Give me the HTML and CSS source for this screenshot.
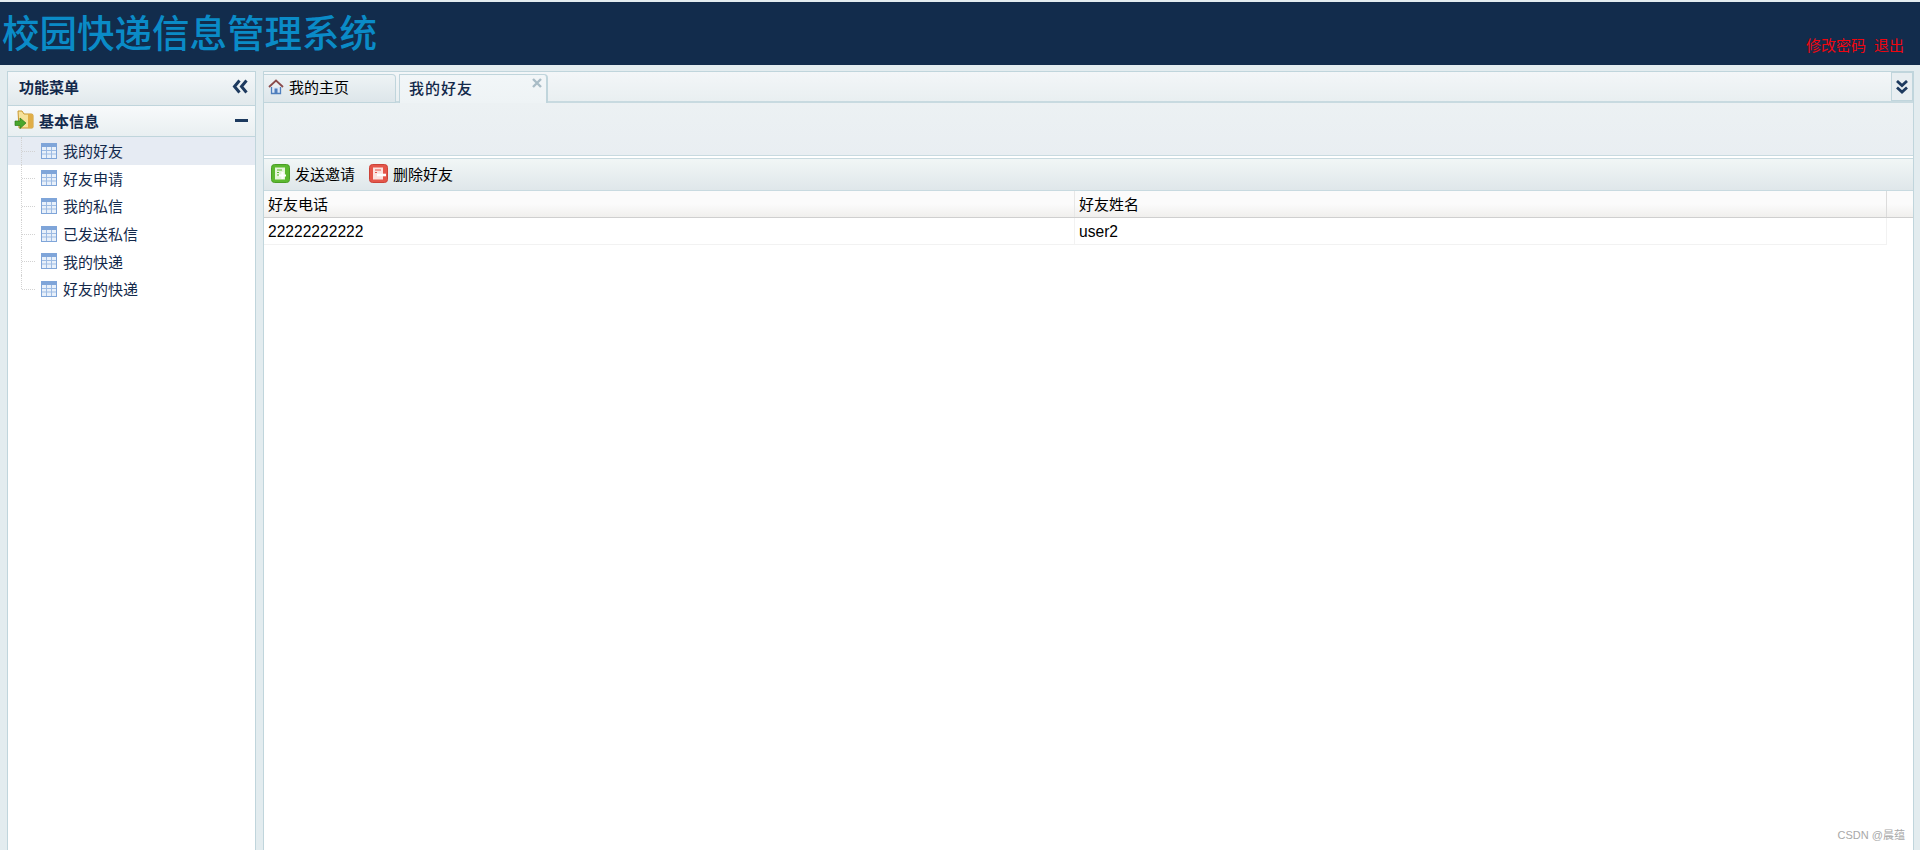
FILE: index.html
```html
<!DOCTYPE html>
<html lang="zh">
<head>
<meta charset="utf-8">
<title>校园快递信息管理系统</title>
<link rel="stylesheet" href="styles.css">
</head>
<body>
<header class="top">
  <h1 class="brand">校园快递信息管理系统</h1>
  <nav class="user-links"><a>修改密码</a><a>退出</a></nav>
</header>
<div class="main">
  <aside class="side">
    <div class="side-head">
      <span>功能菜单</span>
      <svg class="ico-collapse" viewBox="0 0 16 15" width="16" height="15"><path d="M7.500 1.500 2.500 7.500l5 6M14.500 1.500 9.500 7.500l5 6" fill="none" stroke="#1d3a5f" stroke-width="3"/></svg>
    </div>
    <div class="group-head">
      <svg class="ico-folder" viewBox="0 0 20 20" width="20" height="20">
        <path d="M4 1h4l2 3h7.500A1.500 1.500 0 0 1 19 5.500V17a1 1 0 0 1-1 1H5z" fill="#f6e29b" stroke="#c9982f"/>
        <path d="M14 4h3.500A1.500 1.500 0 0 1 19 5.500V17a1 1 0 0 1-1 1h-4z" fill="#e0ae47"/>
        <path d="M1 11h5V8l6 5-6 5.500V15.500H1z" fill="#4aa72c" stroke="#2f7d1c" stroke-width=".7"/>
      </svg>
      <span class="group-title">基本信息</span>
      <span class="minus"></span>
    </div>
    <ul class="tree">
      <li class="tree-item is-on"><i class="twig"></i><svg class="ico-grid" viewBox="0 0 16 16" width="16" height="16"><rect x=".5" y=".5" width="15" height="15" fill="#e8f0fa" stroke="#7fa5d9"/><rect x="1" y="1" width="14" height="3" fill="#7fa5d9"/><path d="M1 7.500h14M1 11h14M5.500 4v11M10.500 4v11" stroke="#9dbbe3"/></svg><span>我的好友</span></li>
      <li class="tree-item"><i class="twig"></i><svg class="ico-grid" viewBox="0 0 16 16" width="16" height="16"><rect x=".5" y=".5" width="15" height="15" fill="#e8f0fa" stroke="#7fa5d9"/><rect x="1" y="1" width="14" height="3" fill="#7fa5d9"/><path d="M1 7.500h14M1 11h14M5.500 4v11M10.500 4v11" stroke="#9dbbe3"/></svg><span>好友申请</span></li>
      <li class="tree-item"><i class="twig"></i><svg class="ico-grid" viewBox="0 0 16 16" width="16" height="16"><rect x=".5" y=".5" width="15" height="15" fill="#e8f0fa" stroke="#7fa5d9"/><rect x="1" y="1" width="14" height="3" fill="#7fa5d9"/><path d="M1 7.500h14M1 11h14M5.500 4v11M10.500 4v11" stroke="#9dbbe3"/></svg><span>我的私信</span></li>
      <li class="tree-item"><i class="twig"></i><svg class="ico-grid" viewBox="0 0 16 16" width="16" height="16"><rect x=".5" y=".5" width="15" height="15" fill="#e8f0fa" stroke="#7fa5d9"/><rect x="1" y="1" width="14" height="3" fill="#7fa5d9"/><path d="M1 7.500h14M1 11h14M5.500 4v11M10.500 4v11" stroke="#9dbbe3"/></svg><span>已发送私信</span></li>
      <li class="tree-item"><i class="twig"></i><svg class="ico-grid" viewBox="0 0 16 16" width="16" height="16"><rect x=".5" y=".5" width="15" height="15" fill="#e8f0fa" stroke="#7fa5d9"/><rect x="1" y="1" width="14" height="3" fill="#7fa5d9"/><path d="M1 7.500h14M1 11h14M5.500 4v11M10.500 4v11" stroke="#9dbbe3"/></svg><span>我的快递</span></li>
      <li class="tree-item is-last"><i class="twig"></i><svg class="ico-grid" viewBox="0 0 16 16" width="16" height="16"><rect x=".5" y=".5" width="15" height="15" fill="#e8f0fa" stroke="#7fa5d9"/><rect x="1" y="1" width="14" height="3" fill="#7fa5d9"/><path d="M1 7.500h14M1 11h14M5.500 4v11M10.500 4v11" stroke="#9dbbe3"/></svg><span>好友的快递</span></li>
    </ul>
  </aside>
  <section class="content">
    <div class="tabs">
      <div class="tab">
        <svg class="ico-home" viewBox="0 0 16 16" width="16" height="16"><path d="M1 8 8 1.500 15 8" fill="none" stroke="#8a4b4b" stroke-width="1.800"/><path d="M3.500 8v6.500h9V8" fill="#dbe7f6" stroke="#4f7fbd" stroke-width="1.300"/><rect x="6.500" y="9.500" width="3" height="5" fill="#4f7fbd"/></svg>
        <span>我的主页</span>
      </div>
      <div class="tab tab-active">
        <span>我的好友</span>
        <svg class="ico-close" viewBox="0 0 10 10" width="10" height="10"><path d="M1 1l8 8M9 1 1 9" stroke="#a9bcc6" stroke-width="2.400"/></svg>
      </div>
      <button class="tab-more" type="button" aria-label="more">
        <svg viewBox="0 0 14 14" width="14" height="14"><path d="M2 1 7 5.500 12 1M2 7.500 7 12l5-4.500" fill="none" stroke="#1d3a5f" stroke-width="2.800"/></svg>
      </button>
    </div>
    <div class="filter-bar"></div>
    <div class="toolbar">
      <a class="tool">
        <svg viewBox="0 0 19 19" width="19" height="19"><rect x=".5" y=".5" width="18" height="18" rx="3" fill="#5cb82f" stroke="#4a9e25"/><rect x="4" y="3.500" width="10" height="12" fill="#e6f5da"/><path d="M6 6h5M6 8.500h2M6 11h2" stroke="#5cb82f"/><path d="M11.500 8v7M8 11.500h7" stroke="#fff" stroke-width="2.200"/></svg>
        <span>发送邀请</span>
      </a>
      <a class="tool">
        <svg viewBox="0 0 19 19" width="19" height="19"><rect x=".5" y=".5" width="18" height="18" rx="3" fill="#e4564a" stroke="#cc4338"/><rect x="4" y="3.500" width="10" height="12" fill="#fbe3e0"/><path d="M6 6h6M6 8.500h2" stroke="#e4564a"/><path d="M8 11h9" stroke="#fff" stroke-width="2.600"/></svg>
        <span>删除好友</span>
      </a>
    </div>
    <div class="grid-head">
      <div class="cell cell-a">好友电话</div>
      <div class="cell cell-b">好友姓名</div>
    </div>
    <div class="grid-row">
      <div class="cell cell-a value">22222222222</div>
      <div class="cell cell-b value">user2</div>
    </div>
  </section>
</div>
<span class="watermark">CSDN @晨蕴</span>
</body>
</html>
```
FILE: styles.css
```css
* { box-sizing: border-box; }
html, body { height: 100%; }
body {
  margin: 0;
  height: 850px;
  overflow: hidden;
  position: relative;
  display: flex;
  flex-direction: column;
  background: #e3ecef;
  font-family: "Liberation Sans", "Noto Sans CJK SC", sans-serif;
  font-size: 15px;
  color: #000;
}
.top {
  margin-top: 2px;
  height: 63px;
  flex: none;
  display: flex;
  justify-content: space-between;
  background: #122c4c;
}
.brand {
  margin: 0 0 0 2px;
  padding-top: 10px;
  font-size: 37.500px;
  line-height: 45px;
  font-weight: 500;
  color: #0a8bc7;
}
.user-links {
  display: flex;
  gap: 8px;
  padding: 34px 16px 0 0;
  color: #f0060f;
  font-size: 15px;
  line-height: 20px;
}
.main {
  flex: 1;
  display: flex;
  gap: 7px;
  padding: 6px 6px 0 7px;
  min-height: 0;
}
.side {
  width: 249px;
  flex: none;
  background: #fff;
  border: 1px solid #c0d5dc;
  border-bottom: 0;
}
.side-head {
  height: 34px;
  padding: 0 7px 5px 11px;
  display: flex;
  align-items: center;
  justify-content: space-between;
  background: linear-gradient(#f4f7f9, #e1e9ec);
  border-bottom: 1px solid #c0d5dc;
  font-weight: 700;
  color: #13294b;
}
.group-head {
  height: 31px;
  padding: 0 7px 2px 6px;
  display: flex;
  align-items: center;
  background: linear-gradient(#f8fafb, #e9eff1);
  border-bottom: 1px solid #c0d5dc;
  font-weight: 700;
  color: #13294b;
}
.group-title { margin-left: 5px; flex: 1; }
.minus { width: 13px; height: 3px; background: #1d3a5f; }
.tree { list-style: none; margin: 0; padding: 0; }
.tree-item {
  position: relative;
  height: 27.600px;
  display: flex;
  align-items: center;
  padding-left: 33px;
  color: #13294b;
  gap: 6px;
}
.tree-item.is-on { background: #e6ebf3; }
.tree-item .ico-grid { flex: none; }
.twig {
  position: absolute;
  left: 13px;
  top: 0;
  bottom: 0;
  width: 14px;
  border-left: 1px dotted #d2d2d2;
}
.is-last .twig { bottom: 50%; }
.twig::after {
  content: "";
  position: absolute;
  left: 0;
  top: 50%;
  width: 13px;
  border-top: 1px dotted #d2d2d2;
}
.is-last .twig::after { top: 100%; }
.content {
  flex: 1;
  min-width: 0;
  background: #fff;
  border-left: 1px solid #c0d5dc;
  border-right: 1px solid #c0d5dc;
  border-top: 1px solid #c0d5dc;
  display: flex;
  flex-direction: column;
}
.tabs {
  position: relative;
  height: 31px;
  flex: none;
  padding-top: 2px;
  display: flex;
  gap: 3px;
  background: linear-gradient(#f3f6f8, #e9eff1);
  border-bottom: 2px solid #c8dae0;
}
.tab {
  width: 132px;
  height: 29px;
  padding: 0 0 4px 4px;
  display: flex;
  align-items: center;
  gap: 5px;
  background: linear-gradient(#eef3f5, #dde6ea);
  border: 1px solid #c0d5dc;
  border-left: 0;
  border-top-right-radius: 4px;
}
.tab-active {
  position: relative;
  width: 149px;
  height: 29px;
  padding-left: 9px;
  background: linear-gradient(#f2f6f8, #eef3f5);
  border: 1px solid #c0d5dc;
  border-bottom: 0;
  border-right-width: 2px;
  color: #13294b;
  font-weight: 500;
  letter-spacing: 1px;
}
.ico-close { position: absolute; top: 3px; right: 4px; }
.tab-more {
  position: absolute;
  right: 0;
  top: 0;
  width: 22px;
  height: 29px;
  padding: 0;
  display: flex;
  align-items: center;
  justify-content: center;
  background: #e8eef1;
  border: 1px solid #c0d5dc;
}
.filter-bar {
  height: 53px;
  flex: none;
  background: linear-gradient(#ecf1f3, #e9eef2);
  border-bottom: 1px solid #c8dae0;
}
.toolbar {
  height: 33px;
  flex: none;
  margin-top: 2px;
  padding: 0 0 2px 7px;
  display: flex;
  align-items: center;
  gap: 14px;
  background: linear-gradient(#f1f6f6, #dfe7ea);
  border-top: 1px solid #c8dae0;
  border-bottom: 1px solid #c8dae0;
}
.tool { display: flex; align-items: center; gap: 5px; }
.grid-head, .grid-row { display: flex; flex: none; }
.grid-head {
  height: 27px;
  background: linear-gradient(#fbfbfb 50%, #f0efed);
  border-bottom: 1px solid #cfcfcf;
}
.grid-row { height: 27px; }
.cell {
  padding-left: 4px;
  padding-bottom: 2px;
  display: flex;
  align-items: center;
}
.cell.value {
  padding-bottom: 0;
  padding-top: 1px;
  font-size: 15.600px;
}
.cell-a { width: 811px; }
.cell-b { width: 812px; }
.grid-head .cell { border-right: 1px solid #dcdcdc; }
.grid-head .cell-a { border-right-color: #e7e7e7; }
.grid-row .cell { border-right: 1px solid #f2f2f2; border-bottom: 1px solid #f2f2f2; }
.watermark {
  position: absolute;
  right: 15px;
  bottom: 8px;
  font-size: 11px;
  color: #a8a8a8;
}
```
